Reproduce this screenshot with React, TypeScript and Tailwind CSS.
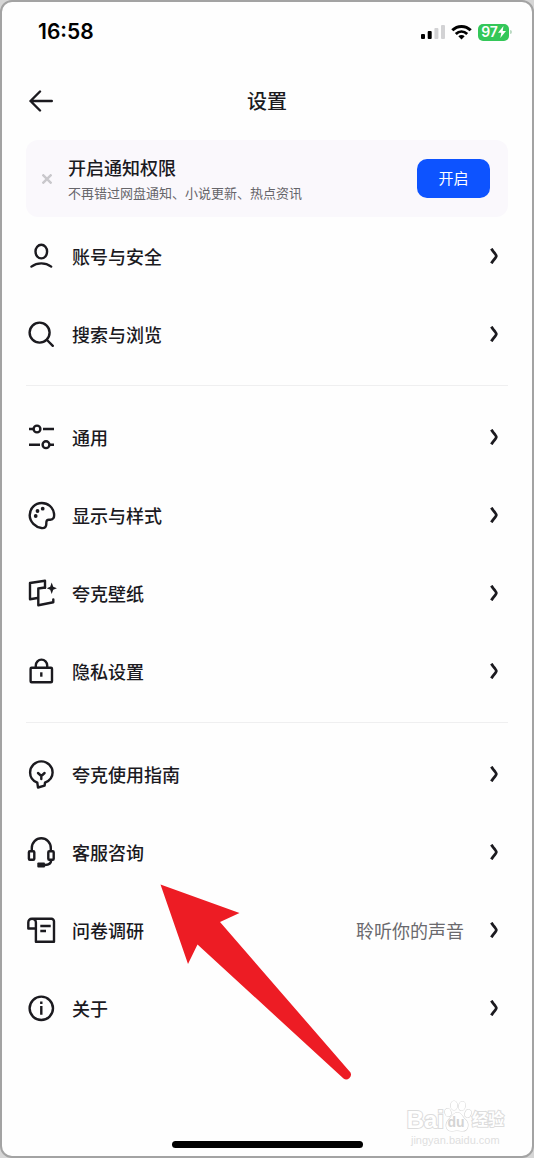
import type { ReactNode } from "react";

type Item = { label: string; icon: ReactNode; note?: string };

const icons = {
  user: (
    <>
      <ellipse cx="15.3" cy="10.6" rx="5.8" ry="6.8" />
      <path d="M5.4 25.6C8.4 23.4 11.6 22.4 15.3 22.4s6.9 1 9.9 3.2" />
    </>
  ),
  search: (
    <>
      <circle cx="13.6" cy="13.6" r="10" />
      <path d="M21 21l5.8 5.8" />
    </>
  ),
  sliders: (
    <>
      <path d="M3 7h4.500M17 7h11M3 22.700h11M23.600 22.700H28" strokeLinecap="butt" />
      <circle cx="11" cy="7" r="3.4" />
      <circle cx="20" cy="22.7" r="3.4" />
    </>
  ),
  palette: (
    <>
      <path d="M27.5 18C28.3 16.8 28.2 15 28 13.5C27 7 22 3 15.8 3C9 3 3.7 8.5 3.7 15.3C3.7 22 9.500 27 15.5 28C19 28.5 20.5 26.5 20.3 23.5C20.2 20.5 21.2 19.5 23.5 19.7C25.3 19.9 26.7 19.5 27.5 18Z" />
      <g fill="currentColor" stroke="none">
        <circle cx="9.7" cy="16" r="1.9" />
        <circle cx="11.5" cy="11" r="1.9" />
        <circle cx="16.7" cy="8.7" r="1.9" />
      </g>
    </>
  ),
  wallpaper: (
    <>
      <path d="M19 9.7V2.8L4 5v16.3l7.5-1.3" />
      <path d="M19 9.5l-6.7 1V27.2l15-3v-2.7" />
      <path d="M25.7 4.500l1.500 4.300 3.700 1.500-3.700 1.500-1.500 4.300-1.500-4.300-3.400-1.500 3.400-1.500z" fill="currentColor" stroke="none" />
    </>
  ),
  lock: (
    <>
      <rect x="4.600" y="11.700" width="21.400" height="14.600" rx="1" />
      <path d="M9.800 11.500V9.500a5.700 5.900 0 0 1 11.400 0v2" />
      <path d="M15.300 16.300v4.400" strokeLinecap="butt" />
    </>
  ),
  guide: (
    <>
      <path d="M11.3 23.7C6.8 21.9 4.1 18 4.1 13.5C4.1 7.3 9.1 2.4 15.3 2.4S26.6 7.3 26.6 13.5C26.6 18 23.5 21.8 19 23.7L18.6 26.7L12 28.5Z" />
      <path d="M12 14l3.300 3 3.300-3M15.300 17v3" />
    </>
  ),
  headset: (
    <>
      <path d="M5.800 13.700V11a9.500 9.700 0 0 1 19 0v2.700" />
      <rect x="2.900" y="14.200" width="5.400" height="8.600" rx="1" />
      <rect x="22.300" y="14.200" width="5.400" height="8.600" rx="1" />
      <path d="M25.200 23.300c-.2 2.900-2.200 4.500-6.200 4.700" />
      <rect x="11.300" y="25.600" width="7.700" height="5" rx="1" fill="currentColor" stroke="none" />
    </>
  ),
  survey: (
    <>
      <path d="M6 3.8h19.5a2.500 2.500 0 0 1 2.500 2.500V26.700H9.900V7.500C9.900 5.200 8.400 3.800 6 3.800C3.600 3.800 2.300 5.200 2.300 7.500V13.500H9.500" />
      <path d="M14.300 11h10.400M14.300 16h5.700" strokeLinecap="butt" />
    </>
  ),
  info: (
    <>
      <circle cx="15.300" cy="15.300" r="11.700" />
      <path d="M15.300 13v8.700M15.300 8.500v2.600" strokeLinecap="butt" />
    </>
  ),
};

const groups: Item[][] = [
  [
    { label: "账号与安全", icon: icons.user },
    { label: "搜索与浏览", icon: icons.search },
  ],
  [
    { label: "通用", icon: icons.sliders },
    { label: "显示与样式", icon: icons.palette },
    { label: "夸克壁纸", icon: icons.wallpaper },
    { label: "隐私设置", icon: icons.lock },
  ],
  [
    { label: "夸克使用指南", icon: icons.guide },
    { label: "客服咨询", icon: icons.headset },
    { label: "问卷调研", icon: icons.survey, note: "聆听你的声音" },
    { label: "关于", icon: icons.info },
  ],
];

function StatusBar() {
  return (
    <div className="flex h-15 items-center justify-between pr-5 pl-9 text-black">
      <time className="font-['Inter',sans-serif] text-[21px] font-semibold">16:58</time>
      <div className="flex items-center gap-1.5">
        <svg className="h-4 w-6" viewBox="0 0 24 16" aria-hidden="true">
          <rect x="0" y="10" width="4" height="5" rx="1" />
          <rect x="6.7" y="7" width="4" height="8" rx="1" />
          <rect x="13.4" y="4" width="4" height="11" rx="1" fill="#d2d2d4" />
          <rect x="20" y="1" width="4" height="14" rx="1" fill="#d2d2d4" />
        </svg>
        <svg className="h-4 w-[21px]" viewBox="0 0 21 16" aria-hidden="true">
          <path d="M1.3 6.3C6.6 1.1 14.4 1.1 19.7 6.3" fill="none" stroke="currentColor" strokeWidth="3" />
          <path d="M4.8 10C8.2 6.7 12.8 6.7 16.2 10" fill="none" stroke="currentColor" strokeWidth="2.8" />
          <path d="M7.3 12.3C9.2 10.7 11.8 10.7 13.7 12.3L10.5 15.6Z" />
        </svg>
        <div className="flex items-center gap-px">
          <div className="flex h-[17px] w-[31px] items-center justify-center rounded-[5px] bg-[#34c759] font-['Inter',sans-serif] text-sm font-semibold text-white">
            97
            <svg className="h-3 w-2" viewBox="0 0 8 12" fill="currentColor" aria-hidden="true">
              <path d="M5.5 0L0 6.800h3.300L2.300 12 8 5H4.700z" />
            </svg>
          </div>
          <span className="h-1 w-0.5 rounded-r-full bg-[#b9d9c1]" />
        </div>
      </div>
    </div>
  );
}

function Row({ label, icon, note }: Item) {
  return (
    <li>
      <a href="#" className="flex h-[78px] items-center gap-4 pr-2.5">
        <svg
          className="size-[30px] shrink-0 overflow-visible"
          viewBox="0 0 30 30"
          fill="none"
          stroke="currentColor"
          strokeWidth="2.4"
          strokeLinecap="round"
          strokeLinejoin="round"
          aria-hidden="true"
        >
          {icon}
        </svg>
        <span className="flex-1 text-lg font-medium">{label}</span>
        {note && <span className="mr-2.5 text-lg text-[#6a696d]">{note}</span>}
        <svg className="h-4 w-2 shrink-0" viewBox="0 0 8 16" fill="none" stroke="currentColor" strokeWidth="2.8" aria-hidden="true">
          <path d="M1.3 .7L3.2 3.4Q6.3 7 6.3 8T3.2 12.6L1.3 15.3" />
        </svg>
      </a>
    </li>
  );
}

function Watermark() {
  return (
    <div className="absolute right-7 bottom-2 flex flex-col items-center font-['Liberation_Sans','Noto_Sans_CJK_SC',sans-serif] text-white">
      <div className="flex h-8 items-end [-webkit-text-stroke:2px_#dcdcdc] [paint-order:stroke]">
        <span className="text-2xl leading-6 font-bold">Bai</span>
        <span className="relative flex h-8 w-7 items-end justify-center">
          <svg className="absolute inset-0 h-8 w-7" viewBox="0 0 28 32" fill="#fff" stroke="#d8d8d8" strokeWidth="1.2" aria-hidden="true">
            <path d="M13.500 12.500C17 12.500 18.500 17 21.500 19.800C25.500 23.500 24.500 31 18.500 31C16.500 31 15 30.500 13 30.500S9.500 31 7.500 31C1.500 31 .8 24 4.500 20C7.500 17 9.500 12.500 13.500 12.500Z" />
            <ellipse cx="4" cy="12.500" rx="3" ry="4" transform="rotate(-15 4 12.500)" />
            <ellipse cx="10" cy="5.500" rx="3.200" ry="4.500" />
            <ellipse cx="18" cy="6" rx="3.200" ry="4.500" transform="rotate(12 18 6)" />
            <ellipse cx="24" cy="13.500" rx="3" ry="4" transform="rotate(20 24 13.500)" />
          </svg>
          <span className="relative mr-1 text-sm leading-5 font-bold text-[#d4d4d4] [-webkit-text-stroke:0px]">du</span>
        </span>
        <span className="text-base leading-6 font-bold">经验</span>
      </div>
      <span className="text-[11px] leading-4 text-[#dedede]">jingyan.baidu.com</span>
    </div>
  );
}

export default function App() {
  return (
    <div className="flex min-h-screen flex-col bg-[#d6d6d6] font-['Noto_Sans_CJK_SC',sans-serif] text-[#1b1a1f]">
      <div className="relative flex flex-1 flex-col rounded-xl border-2 border-[#a3a3a3] bg-[#fefefe]">
        <StatusBar />
        <main className="px-6">
          <header className="grid h-[78px] grid-cols-[30px_1fr_30px] items-center">
            <button type="button" aria-label="返回" className="flex size-[30px] items-center justify-center">
              <svg className="size-6" viewBox="0 0 24 24" fill="none" stroke="currentColor" strokeWidth="2.400" strokeLinecap="round" strokeLinejoin="round" aria-hidden="true">
                <path d="M22.800 12H1.500M11 2.500L1.500 12l9.500 9.500" />
              </svg>
            </button>
            <h1 className="text-center text-xl font-medium">设置</h1>
          </header>

          <section className="flex h-[77px] items-center rounded-xl bg-[#faf8fc] pr-[18px] pl-4">
            <button type="button" aria-label="关闭" className="mr-4 text-[#c9c8cc]">
              <svg className="size-2.5" viewBox="0 0 10 10" stroke="currentColor" strokeWidth="2.4" aria-hidden="true">
                <path d="M.5 .5l9 9M9.5 .5l-9 9" />
              </svg>
            </button>
            <div className="flex flex-1 flex-col gap-1">
              <h2 className="text-lg leading-6 font-medium">开启通知权限</h2>
              <p className="text-[13px] leading-5 text-[#66656a]">不再错过网盘通知、小说更新、热点资讯</p>
            </div>
            <button type="button" className="h-[39px] w-[73px] rounded-[10px] bg-[#0d53ff] text-[15px] text-white">
              开启
            </button>
          </section>

          <nav className="divide-y divide-[#efeff0]">
            {groups.map((items, index) => (
              <ul key={index} className="py-3 first:pt-0">
                {items.map((item) => (
                  <Row key={item.label} {...item} />
                ))}
              </ul>
            ))}
          </nav>
        </main>

        <div className="mt-auto flex justify-center pb-2">
          <span className="h-[7px] w-[191px] rounded-full bg-black" />
        </div>

        <Watermark />
        <svg className="pointer-events-none absolute top-[882px] left-[158px] h-[198px] w-[194px]" viewBox="0 0 194 198" aria-hidden="true">
          <path d="M.5 .5L79.5 29L60 38L190.5 188.5A4.8 4.8 0 0 1 183.5 194.5L37.5 60.5L28 80Z" fill="#ed1c24" />
        </svg>
      </div>
    </div>
  );
}
